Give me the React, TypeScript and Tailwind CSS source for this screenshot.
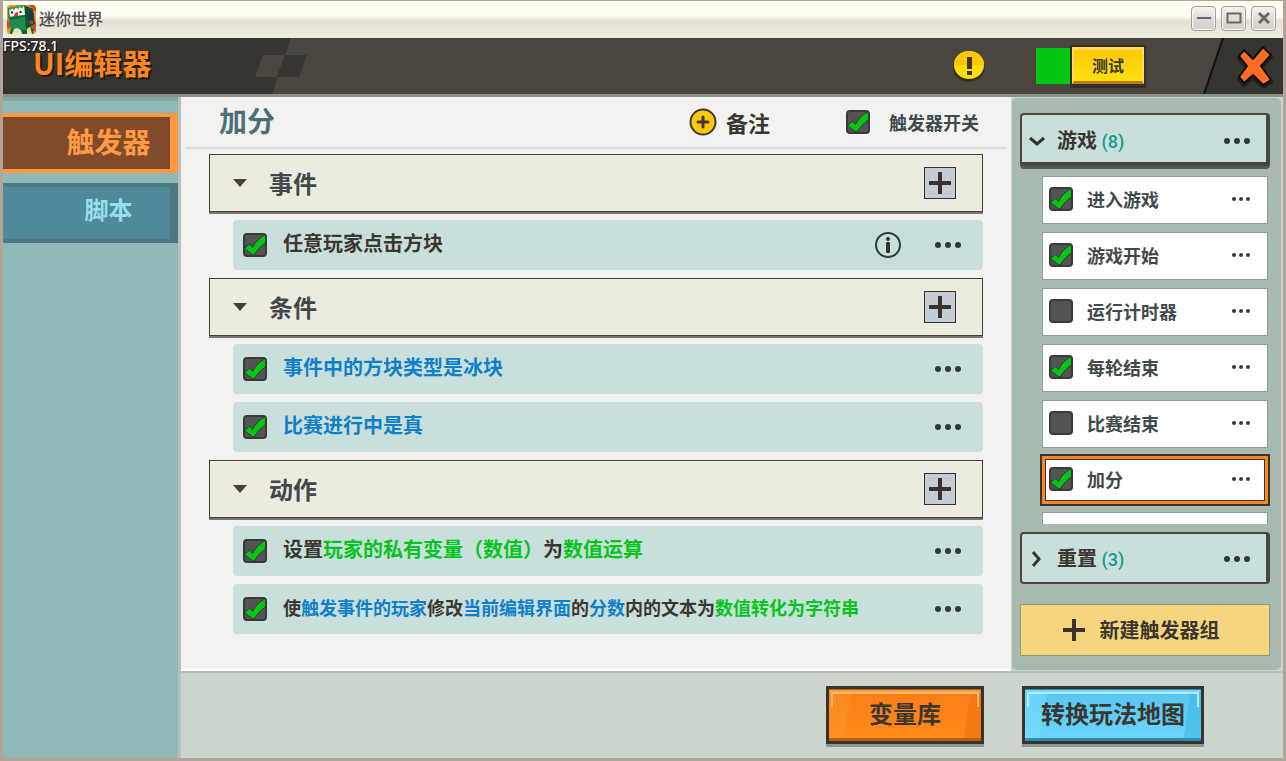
import { useState } from "react";
import type { ReactNode } from "react";

type Tone = "dark" | "blue" | "green";
type Part = { text: string; tone: Tone };
type Rule = { id: string; parts: Part[]; info?: boolean; small?: boolean };

const toneClass: Record<Tone, string> = {
  dark: "text-[#3a3730]",
  blue: "text-[#0f80c8]",
  green: "text-[#05c41c]",
};

const sections: { title: string; rules: Rule[] }[] = [
  {
    title: "事件",
    rules: [{ id: "click", parts: [{ text: "任意玩家点击方块", tone: "dark" }], info: true }],
  },
  {
    title: "条件",
    rules: [
      { id: "ice", parts: [{ text: "事件中的方块类型是冰块", tone: "blue" }] },
      { id: "running", parts: [{ text: "比赛进行中是真", tone: "blue" }] },
    ],
  },
  {
    title: "动作",
    rules: [
      {
        id: "set",
        parts: [
          { text: "设置", tone: "dark" },
          { text: "玩家的私有变量（数值）", tone: "green" },
          { text: "为", tone: "dark" },
          { text: "数值运算", tone: "green" },
        ],
      },
      {
        id: "modify",
        small: true,
        parts: [
          { text: "使", tone: "dark" },
          { text: "触发事件的玩家", tone: "blue" },
          { text: "修改", tone: "dark" },
          { text: "当前编辑界面", tone: "blue" },
          { text: "的", tone: "dark" },
          { text: "分数", tone: "blue" },
          { text: "内的文本为", tone: "dark" },
          { text: "数值转化为字符串", tone: "green" },
        ],
      },
    ],
  },
];

const triggers = [
  { name: "进入游戏", enabled: true },
  { name: "游戏开始", enabled: true },
  { name: "运行计时器", enabled: false },
  { name: "每轮结束", enabled: true },
  { name: "比赛结束", enabled: false },
  { name: "加分", enabled: true, selected: true },
  { name: "", enabled: false },
];

function CheckBox({ id, label, initial = true }: { id?: string; label?: string; initial?: boolean }) {
  const [checked, setChecked] = useState(initial);

  return (
    <span className="grid h-6 w-6 shrink-0">
      <input
        id={id}
        type="checkbox"
        aria-label={label}
        checked={checked}
        onChange={() => setChecked(!checked)}
        className="col-start-1 row-start-1 h-6 w-6 appearance-none rounded border-2 border-[#3a3a3a] bg-[#545454]"
      />
      {checked && (
        <svg viewBox="0 0 24 24" className="pointer-events-none col-start-1 row-start-1 h-6 w-6">
          <path
            d="M1.600 15.200 6.800 11 9.500 14.500C12.500 8.500 17 4 22.600 1.500v8.500C18 13 14 17 11.200 22.200 8 21 4 18 1.600 15.200Z"
            fill="#05c414"
            stroke="#343434"
            strokeWidth="1"
          />
        </svg>
      )}
    </span>
  );
}

function Dots({ label, small = false }: { label: string; small?: boolean }) {
  return (
    <button type="button" aria-label={label}>
      {small ? (
        <svg viewBox="0 0 18 4" className="h-1 w-[18px]" fill="#2f3a3c">
          <circle cx="2" cy="2" r="2" />
          <circle cx="9" cy="2" r="2" />
          <circle cx="16" cy="2" r="2" />
        </svg>
      ) : (
        <svg viewBox="0 0 28 8" className="h-2 w-7" fill="#2f3a3c">
          <circle cx="4" cy="4" r="3" />
          <circle cx="14" cy="4" r="3" />
          <circle cx="24" cy="4" r="3" />
        </svg>
      )}
    </button>
  );
}

function Logo() {
  return (
    <svg viewBox="0 0 29 29" className="h-[29px] w-[29px]">
      <rect width="29" height="29" rx="3" fill="#f6921e" />
      <path d="M0 15l5 3-3 6-2-1ZM29 17l-9 3 9 7ZM22 0h5l2 3v4Z" fill="#c9531c" />
      <path d="M4 22l15-1 8 3-1 5H3Z" fill="#14633c" />
      <path d="M1 3 17 0l9 4 1 15-8 6-15-1L1 12Z" fill="#1f8a50" />
      <path d="M18 1l8 3 2 15-9 5-1-13Z" fill="#0f5233" />
      <path d="M2 4 17 1l1 9L3 12Z" fill="#f8f2e2" />
      <path d="M2 4l1 1.500 2-2 2 1.500 2-2.500 2 1.500 2-2 2 1.500 2-3.500L2 3Z" fill="#2aa15e" />
      <path d="M4 6.500h2v2H4ZM12.500 6h2v2h-2Z" fill="#30231d" />
      <path d="M8 8l3-1v4H7Z" fill="#cf3a2d" />
      <path d="M2 12l16-2v2L4 15Z" fill="#176a3f" />
      <path d="M22 7l3-1 2 4-2 5-4-1Z" fill="#243456" />
      <path d="M22 16h4v3h-3Z" fill="#c62f3a" />
      <path d="M7 24l3-1 4 2 1 4H5Z" fill="#dcebb2" />
      <path d="M20 24l3-2 2 7h-5Z" fill="#f2e19a" />
    </svg>
  );
}

function WindowButton({ label, children }: { label: string; children: ReactNode }) {
  return (
    <button
      type="button"
      aria-label={label}
      className="flex h-[25px] w-[25px] items-center justify-center rounded border border-[#a59a8f] bg-linear-to-b from-[#f5f4f0] via-[#dddcda] to-[#d0ceca] shadow-[inset_0_0_0_1px_#f8f7f4]"
    >
      <svg viewBox="0 0 16 16" className="h-4 w-4" fill="none" stroke="#71655a">
        {children}
      </svg>
    </button>
  );
}

function TitleBar() {
  return (
    <div className="flex h-[37px] shrink-0 items-center justify-between bg-linear-to-b from-[#fcfcf0] from-40% via-[#e4e0d3] via-55% to-[#f0eee2] pr-[7px] pl-1">
      <div className="flex items-center gap-[3px]">
        <Logo />
        <span className="pb-1 text-base font-medium text-[#4c4c4c]">迷你世界</span>
      </div>
      <div className="flex gap-[5px] pb-[3px]">
        <WindowButton label="最小化">
          <path d="M1 8h14" strokeWidth="2" />
        </WindowButton>
        <WindowButton label="最大化">
          <path d="M1.500 3.500h13v9h-13Z" strokeWidth="2" />
        </WindowButton>
        <WindowButton label="关闭">
          <path d="m3 3 10 10M13 3 3 13" strokeWidth="3" />
        </WindowButton>
      </div>
    </div>
  );
}

function Header() {
  return (
    <header className="relative flex h-[59px] shrink-0 items-center justify-between border-b-3 border-[#8b918b] bg-[#4a463f] pr-[9px] pl-[30px]">
      <svg viewBox="0 0 310 56" className="absolute top-0 left-0 h-14 w-[310px]">
        <path d="M0 0h288l-19 56H0Z" fill="#373530" />
        <path d="M260 17h22l-8 22h-22Z" fill="#4a463f" />
        <path d="M282 17h22l-8 22h-22Z" fill="#373530" />
      </svg>
      <svg viewBox="0 0 80 56" className="absolute top-0 right-0 h-14 w-20">
        <path d="M20 0h60v56H1Z" fill="#373530" />
        <path d="M20 0 1 56" stroke="#11110f" strokeWidth="2" />
      </svg>
      <h1 className="relative pb-2 text-[29px] leading-10 font-bold text-[#ff861e] [text-shadow:2px_2px_0_#1c1b18]">
        UI编辑器
      </h1>
      <span className="absolute top-0 left-0 font-['Noto_Sans'] text-sm leading-4 font-medium text-white [text-shadow:1px_1px_1px_#000]">
        FPS:78.1
      </span>

      <div className="relative flex items-center">
        <button type="button" aria-label="提示" className="mr-[51px]">
          <svg viewBox="0 0 32 32" className="h-8 w-8">
            <ellipse cx="16" cy="17" rx="16" ry="15" fill="#302e29" />
            <ellipse cx="16" cy="15" rx="15" ry="14" fill="#ffdc08" />
            <path d="M1 15a15 14 0 0 1 30 0Z" fill="#ffc706" />
            <path d="M14 7h5v12h-5ZM14 21h5v4h-5Z" fill="#3b382b" />
          </svg>
        </button>
        <div className="h-9 w-[34px] bg-[#02c514]" />
        <button
          type="button"
          className="mr-[90px] h-[43px] w-[76px] border-2 border-b-4 border-[#302e29] bg-[#302e29]"
        >
          <span className="flex h-full items-center justify-center border-2 border-t-3 border-b-3 border-[#ffd95c] border-b-[#c07c06] bg-linear-to-b from-[#ffc807] to-[#ffe010] text-base font-bold text-[#3b382b]">
            测试
          </span>
        </button>
        <button type="button" aria-label="退出">
          <svg viewBox="0 0 38 44" className="h-11 w-[38px]">
            <path
              d="m3 14 5-6 9 9L27 5l8 8-10 11 10 14-8 5-10-10-9 8-5-6 8-11Z"
              fill="#22201d"
              stroke="#22201d"
              strokeWidth="4"
              strokeLinejoin="round"
            />
            <path
              d="m3 12 5-6 9 9L27 3l8 8-10 11 10 14-8 5-10-10-9 8-5-6 8-11Z"
              fill="#ff6c24"
              stroke="#0f0e0d"
              strokeWidth="2"
              strokeLinejoin="round"
            />
          </svg>
        </button>
      </div>
    </header>
  );
}

function SideNav() {
  return (
    <nav className="flex w-[175px] shrink-0 flex-col gap-[10px] border-t-4 border-[#84a5a6] bg-[#91b8b8] pt-3">
      <button
        type="button"
        className="h-[60px] border-y-4 border-r-8 border-[#ff993f] bg-[#804b2b] pb-1 pl-11 text-[28px] leading-8 font-bold text-[#ff9a44]"
      >
        触发器
      </button>
      <button
        type="button"
        className="h-[60px] border-y-4 border-r-8 border-[#4d7982] bg-[#4f8a98] pb-2 pl-11 text-2xl font-bold text-[#98dde8]"
      >
        脚本
      </button>
    </nav>
  );
}

function RuleRow({ rule }: { rule: Rule }) {
  return (
    <div className="ml-6 flex h-[50px] items-center rounded bg-[#c9dfdb] pr-[21px] pl-[10px]">
      <CheckBox id={rule.id} />
      <label
        htmlFor={rule.id}
        className={`flex-1 pb-1 pl-4 font-bold whitespace-nowrap ${rule.small ? "text-lg" : "text-xl"}`}
      >
        {rule.parts.map((part) => (
          <span key={part.text} className={toneClass[part.tone]}>
            {part.text}
          </span>
        ))}
      </label>
      {rule.info && (
        <button type="button" aria-label="说明" className="mr-[33px]">
          <svg viewBox="0 0 26 26" className="h-[26px] w-[26px]">
            <circle cx="13" cy="13" r="12" fill="none" stroke="#2f3a3c" strokeWidth="2" />
            <circle cx="13" cy="7" r="2" fill="#38342d" />
            <rect x="11" y="10" width="4" height="11" rx="1" fill="#38342d" />
          </svg>
        </button>
      )}
      <Dots label="更多" />
    </div>
  );
}

function TriggerEditor() {
  return (
    <main className="flex min-w-0 flex-1 flex-col border-b-2 border-white bg-[#f2f2f0]">
      <div className="mx-1 flex h-[52px] shrink-0 items-center border-b-2 border-[#d2e2d8] pr-7 pl-[34px]">
        <h2 className="flex-1 pb-1 text-[28px] leading-8 font-bold text-[#4c6f75]">加分</h2>
        <button type="button" className="mr-[76px] flex items-center gap-[9px] text-[22px] font-bold text-[#3a3730]">
          <svg viewBox="0 0 28 28" className="h-7 w-7">
            <circle cx="14" cy="14" r="12.500" fill="#ffc806" stroke="#3a3a33" strokeWidth="2" />
            <path d="M14 9v10M9 14h10" stroke="#3a3730" strokeWidth="3" strokeLinecap="round" />
          </svg>
          备注
        </button>
        <CheckBox id="trigger-switch" />
        <label htmlFor="trigger-switch" className="pl-[19px] text-lg font-bold text-[#3f4a4c]">
          触发器开关
        </label>
      </div>

      <div className="flex flex-col gap-2 pt-[5px] pr-7 pl-7">
        {sections.map((section) => (
          <section key={section.title} className="flex flex-col gap-2">
            <div className="flex h-[58px] items-center border border-[#45423b] bg-[#ebecdd] pr-[26px] pl-[23px] shadow-[0_2px_0_#777570]">
              <svg viewBox="0 0 14 8" className="h-2 w-[14px]">
                <path d="M0 0h14L7 8Z" fill="#4a4036" />
              </svg>
              <h3 className="flex-1 pl-[22px] text-2xl font-bold text-[#40484b]">{section.title}</h3>
              <button
                type="button"
                aria-label={`添加${section.title}`}
                className="flex h-8 w-8 items-center justify-center border border-[#38342d] bg-[#c3cdd3]"
              >
                <svg viewBox="0 0 22 22" className="h-[22px] w-[22px]">
                  <path d="M11 0v22M0 11h22" stroke="#38342d" strokeWidth="4" />
                </svg>
              </button>
            </div>
            {section.rules.map((rule) => (
              <RuleRow key={rule.id} rule={rule} />
            ))}
          </section>
        ))}
      </div>
    </main>
  );
}

function TriggerList() {
  return (
    <aside className="flex w-[271px] shrink-0 flex-col rounded-md border border-[#c5d8cb] bg-[#a8baae] pt-[15px] pr-[11px] pb-[14px] pl-2">
      <div className="flex h-[53px] shrink-0 items-center rounded border-2 border-r-4 border-b-4 border-[#4a463f] bg-[#c9dfdb] pt-1 pr-[15px] pl-[7px] shadow-[0_3px_0_#555a53]">
        <svg viewBox="0 0 16 10" className="h-[10px] w-4" fill="none">
          <path d="m1 2 7 6 7-6" stroke="#38342d" strokeWidth="3" />
        </svg>
        <h3 className="flex-1 pl-3 text-xl font-bold text-[#3a3730]">
          游戏 <span className="font-['Roboto'] text-lg font-medium text-[#0c9d8f]">(8)</span>
        </h3>
        <Dots label="游戏更多" />
      </div>

      <ul className="mb-2 flex min-h-0 flex-1 flex-col gap-2 overflow-hidden pt-[10px] pr-[2px] pl-[22px]">
        {triggers.map((trigger) => (
          <li
            key={trigger.name}
            className={
              trigger.selected
                ? "-mx-[2px] -my-[2px] h-[52px] shrink-0 border-2 border-[#38342d] bg-[#ff861e] p-[3px]"
                : "h-12 shrink-0 border border-[#8a9b91] bg-white"
            }
          >
            <div
              className={
                trigger.selected
                  ? "flex h-full items-center border border-[#38342d] bg-white pr-[14px] pb-[2px] pl-[3px]"
                  : "flex h-full items-center pr-[17px] pb-[2px] pl-[6px]"
              }
            >
              {trigger.name && (
                <>
                  <CheckBox label={trigger.name} initial={trigger.enabled} />
                  <a href="#" className="flex-1 pl-[14px] text-lg font-bold text-[#3f4a4c]">
                    {trigger.name}
                  </a>
                  <Dots label={`${trigger.name}更多`} small />
                </>
              )}
            </div>
          </li>
        ))}
      </ul>

      <div className="flex h-[52px] shrink-0 items-center rounded border-2 border-r-4 border-[#4a463f] bg-[#c9dfdb] pt-[2px] pr-[15px] pl-[7px]">
        <svg viewBox="0 0 16 16" className="h-4 w-4" fill="none">
          <path d="m4 1 6 7-6 7" stroke="#38342d" strokeWidth="3" />
        </svg>
        <h3 className="flex-1 pl-3 text-xl font-bold text-[#3a3730]">
          重置 <span className="font-['Roboto'] text-lg font-medium text-[#0c9d8f]">(3)</span>
        </h3>
        <Dots label="重置更多" />
      </div>

      <button
        type="button"
        className="mt-5 flex h-[52px] shrink-0 items-center justify-center gap-[15px] border border-[#8f9a84] bg-[#f5d57e] pr-2 text-xl font-bold text-[#3a3730]"
      >
        <svg viewBox="0 0 22 22" className="h-[22px] w-[22px]">
          <path d="M11 0v22M0 11h22" stroke="#38342d" strokeWidth="4" />
        </svg>
        新建触发器组
      </button>
    </aside>
  );
}

function Footer() {
  return (
    <footer className="flex h-[87px] shrink-0 items-start justify-end gap-[38px] border-t-2 border-[#b4bfb7] bg-[#cbd4cd] pt-[13px] pr-[79px]">
      <button
        type="button"
        className="relative h-[58px] w-[158px] border-3 border-[#38342d] bg-linear-to-b from-[#fb7d16] to-[#ff8c1a] pb-1 text-2xl font-bold text-[#3a3730] shadow-[0_3px_0_#8f9690]"
      >
        <svg viewBox="0 0 152 52" preserveAspectRatio="none" className="absolute inset-0 h-full w-full">
          <path d="M0 0h23l-9 52H0Z" fill="#ff9427" opacity="0.5" />
          <path d="M142 0h10v52h-18Z" fill="#f27310" opacity="0.7" />
          <path d="M0 0h152v1H0ZM0 49h152v3H0Z" fill="#b75e12" />
          <path d="M1 1h150v3H1Z" fill="#ffa142" />
          <path d="M3 18V4h146v14" fill="none" stroke="#ffb768" strokeWidth="2" />
        </svg>
        <span className="relative">变量库</span>
      </button>
      <button
        type="button"
        className="relative h-[58px] w-[182px] border-3 border-[#38342d] bg-linear-to-b from-[#55c6f0] to-[#6dd6fc] pb-1 text-2xl font-bold text-[#3a3730] shadow-[0_3px_0_#8f9690]"
      >
        <svg viewBox="0 0 176 52" preserveAspectRatio="none" className="absolute inset-0 h-full w-full">
          <path d="M0 0h23l-9 52H0Z" fill="#7fdcff" opacity="0.5" />
          <path d="M166 0h10v52h-18Z" fill="#45bae8" opacity="0.7" />
          <path d="M0 0h176v1H0ZM0 49h176v3H0Z" fill="#2f8db4" />
          <path d="M1 1h174v3H1Z" fill="#74d6fa" />
          <path d="M3 18V4h170v14" fill="none" stroke="#b4ecff" strokeWidth="2" />
        </svg>
        <span className="relative">转换玩法地图</span>
      </button>
    </footer>
  );
}

export default function App() {
  return (
    <div className="flex h-screen flex-col border-x-3 border-t border-b-3 border-[#b0a598] bg-[#cbd4cd] font-['Noto_Sans_CJK_SC',sans-serif]">
      <TitleBar />
      <Header />
      <div className="flex min-h-0 flex-1">
        <SideNav />
        <div className="flex min-w-0 flex-1 flex-col border-l-3 border-[#b7c0ba]">
          <div className="flex min-h-0 flex-1 pr-px">
            <TriggerEditor />
            <TriggerList />
          </div>
          <Footer />
        </div>
      </div>
    </div>
  );
}
